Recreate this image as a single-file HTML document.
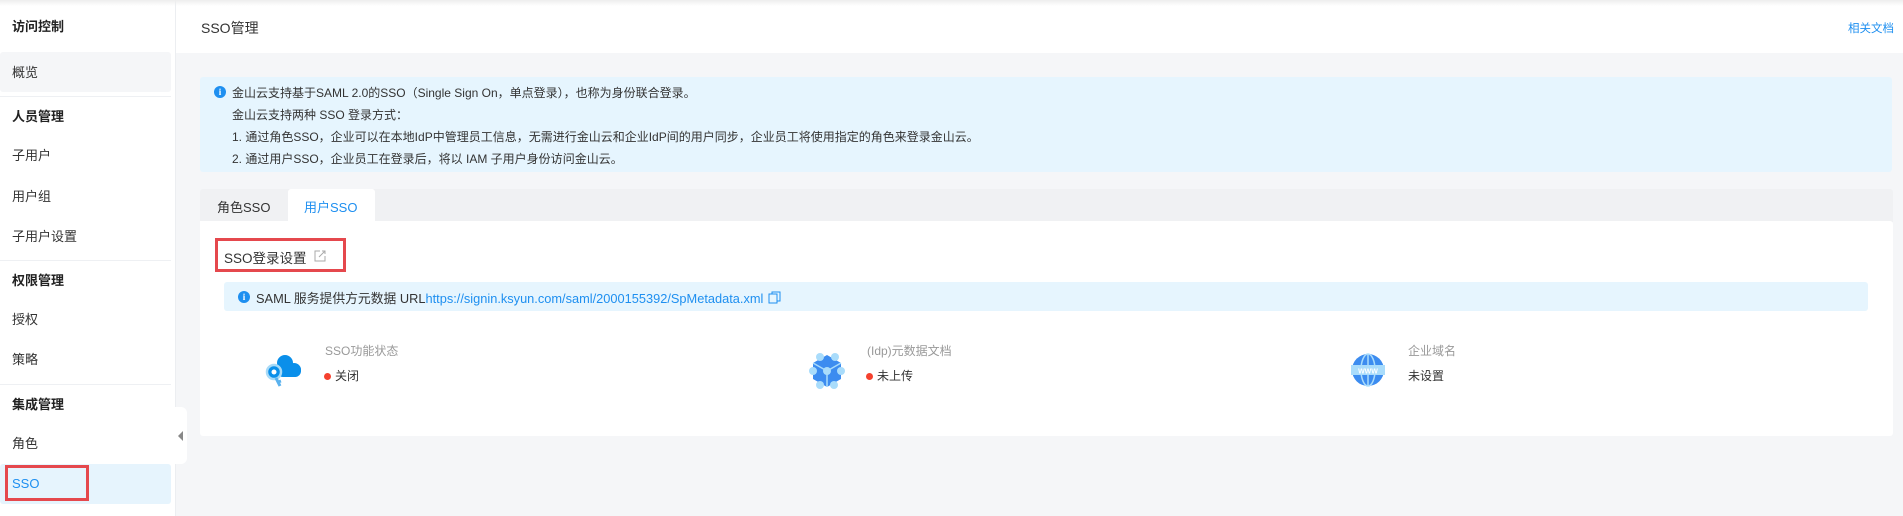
<!DOCTYPE html>
<html><head><meta charset="utf-8"><style>
*{margin:0;padding:0;box-sizing:border-box}
body{width:1903px;height:516px;overflow:hidden;background:#f5f6f8;font-family:"Liberation Sans","Noto Sans CJK SC",sans-serif;color:#333;position:relative}
.abs{position:absolute}
.side{left:0;top:0;width:175px;height:516px;background:#fff}
.si{position:absolute;left:12px;font-size:13px;color:#333;line-height:16px}
.b{font-weight:bold;color:#222}
.sep{position:absolute;left:0;width:171px;height:1px;background:#eef0f3}
.hdr{left:176px;top:0;width:1727px;height:53px;background:#fff}
.info{left:200px;top:77px;width:1692px;height:95px;background:#e6f5fe;border-radius:3px;font-size:12px;color:#333}
.info div{position:absolute;left:32px;line-height:16px}
.ic{position:absolute;width:12px;height:12px;border-radius:50%;background:#1e8ff0;color:#fff;font-size:9px;font-weight:bold;text-align:center;line-height:12px;font-family:"Liberation Serif",serif}
.card{left:200px;top:221px;width:1693px;height:215px;background:#fff;border-radius:0 3px 3px 3px}
.lbl{font-size:12px;color:#999;position:absolute}
.val{font-size:12px;color:#333;position:absolute}
.dot{display:inline-block;width:7px;height:7px;border-radius:50%;background:#f5412e;margin-right:4px;vertical-align:0}
</style></head><body>
<div class="abs side">
<div class="si b" style="top:19px;font-size:13px">访问控制</div>
<div class="abs" style="left:0;top:52px;width:171px;height:40px;background:#f5f6f8;border-radius:3px"></div>
<div class="si" style="top:65px">概览</div>
<div class="sep" style="top:96px"></div>
<div class="si b" style="top:109px">人员管理</div>
<div class="si" style="top:148px">子用户</div>
<div class="si" style="top:189px">用户组</div>
<div class="si" style="top:229px">子用户设置</div>
<div class="sep" style="top:260px"></div>
<div class="si b" style="top:273px">权限管理</div>
<div class="si" style="top:312px">授权</div>
<div class="si" style="top:352px">策略</div>
<div class="sep" style="top:384px"></div>
<div class="si b" style="top:397px">集成管理</div>
<div class="si" style="top:436px">角色</div>
<div class="abs" style="left:0;top:464px;width:171px;height:40px;background:#e6f4fd;border-radius:3px"></div>
<div class="abs" style="left:5px;top:465px;width:84px;height:36px;border:3px solid #e5484d"></div>
<div class="si" style="top:476px;color:#1e8ff0">SSO</div>
</div>
<div class="abs" style="left:175px;top:0;width:1px;height:516px;background:#eceef1"></div>
<div class="abs" style="left:174px;top:407px;width:13px;height:57px;background:#fff;border-radius:0 6px 6px 0"></div>
<div class="abs" style="left:178px;top:431px;width:0;height:0;border-top:5px solid transparent;border-bottom:5px solid transparent;border-right:5px solid #888"></div>
<div class="abs hdr"></div>
<div class="abs" style="left:0;top:0;width:1903px;height:6px;background:linear-gradient(#eee,rgba(255,255,255,0))"></div>
<div class="abs" style="left:201px;top:18px;font-size:14px;color:#333">SSO管理</div>
<div class="abs" style="left:1848px;top:20px;font-size:11.5px;color:#1e8ff0">相关文档</div>
<div class="abs info">
<span class="ic" style="left:14px;top:9px">i</span>
<div style="top:8px">金山云支持基于SAML 2.0的SSO（Single Sign On，单点登录），也称为身份联合登录。</div>
<div style="top:30px">金山云支持两种 SSO 登录方式：</div>
<div style="top:52px">1. 通过角色SSO，企业可以在本地IdP中管理员工信息，无需进行金山云和企业IdP间的用户同步，企业员工将使用指定的角色来登录金山云。</div>
<div style="top:74px">2. 通过用户SSO，企业员工在登录后，将以 IAM 子用户身份访问金山云。</div>
</div>
<div class="abs" style="left:200px;top:189px;width:1693px;height:33px;background:#f0f1f3;border-radius:3px 3px 0 0"></div>
<div class="abs" style="left:217px;top:197px;font-size:13px;color:#333">角色SSO</div>
<div class="abs" style="left:288px;top:189px;width:87px;height:33px;background:#fff;border-radius:3px 3px 0 0"></div>
<div class="abs" style="left:304px;top:197px;font-size:13px;color:#1e8ff0">用户SSO</div>
<div class="abs card"></div>
<div class="abs" style="left:215px;top:238px;width:131px;height:34px;border:3px solid #e5484d"></div>
<div class="abs" style="left:224px;top:247px;font-size:13.5px;color:#333">SSO登录设置</div>
<svg class="abs" style="left:313px;top:249px" width="14" height="14" viewBox="0 0 14 14"><path d="M7 2H2v10h10V7M6 8l6-6M9 2h3v3" fill="none" stroke="#aaa" stroke-width="1"/></svg>
<div class="abs" style="left:224px;top:282px;width:1644px;height:29px;background:#e6f5fe;border-radius:3px"></div>
<span class="ic abs" style="left:238px;top:291px">i</span>
<div class="abs" style="left:256px;top:288px;font-size:12.8px;color:#333;white-space:nowrap">SAML 服务提供方元数据 URL<span style="color:#1e8ff0">https://signin.ksyun.com/saml/2000155392/SpMetadata.xml</span><svg style="margin-left:5px;vertical-align:-1px" width="13" height="13" viewBox="0 0 13 13"><rect x="1" y="3" width="8" height="9" fill="none" stroke="#1e8ff0"/><path d="M4 3V1h8v9h-3" fill="none" stroke="#1e8ff0"/></svg></div>
<!-- icon 1 -->
<svg class="abs" style="left:263px;top:350px" width="40" height="40" viewBox="0 0 40 40"><circle cx="22" cy="13" r="8" fill="#0a8fea"/><circle cx="31" cy="20" r="7" fill="#0a8fea"/><rect x="14" y="14" width="24" height="13" rx="6" fill="#0a8fea"/><circle cx="11" cy="22" r="7" fill="#0a8fea" stroke="#a8daf7" stroke-width="2.5"/><circle cx="11" cy="22" r="2.5" fill="#fff"/><path d="M13 28l4 8M15 32l3-1" stroke="#5ab2ee" stroke-width="3"/></svg>
<div class="lbl" style="left:325px;top:342px">SSO功能状态</div>
<div class="val" style="left:324px;top:367px"><span class="dot"></span>关闭</div>
<!-- icon 2 -->
<svg class="abs" style="left:808px;top:352px" width="38" height="38" viewBox="0 0 38 38"><polygon points="19,3 33,11 33,27 19,35 5,27 5,11" fill="#3c8cf0"/><path d="M19 19L33 11M19 19L5 11M19 19v16" stroke="#a9dcfb" stroke-width="1.5"/><g fill="#a9dcfb"><circle cx="12" cy="5" r="4"/><circle cx="27" cy="5" r="4"/><circle cx="5" cy="19" r="4"/><circle cx="19" cy="19" r="4"/><circle cx="33" cy="19" r="4"/><circle cx="12" cy="33" r="4"/><circle cx="26" cy="33" r="4"/></g></svg>
<div class="lbl" style="left:867px;top:342px">(Idp)元数据文档</div>
<div class="val" style="left:866px;top:367px"><span class="dot"></span>未上传</div>
<!-- icon 3 -->
<svg class="abs" style="left:1351px;top:353px" width="34" height="34" viewBox="0 0 34 34"><circle cx="17" cy="17" r="16" fill="#3c8cf0"/><ellipse cx="17" cy="17" rx="7" ry="16" fill="none" stroke="#a9dcfb" stroke-width="1.5"/><line x1="17" y1="1" x2="17" y2="33" stroke="#a9dcfb" stroke-width="1.5"/><rect x="0" y="12" width="34" height="10" fill="#a9dcfb"/><text x="17" y="20.5" font-size="7" fill="#fff" text-anchor="middle" font-family="Liberation Sans" font-weight="bold">WWW</text></svg>
<div class="lbl" style="left:1408px;top:342px">企业域名</div>
<div class="val" style="left:1408px;top:367px">未设置</div>
</body></html>
